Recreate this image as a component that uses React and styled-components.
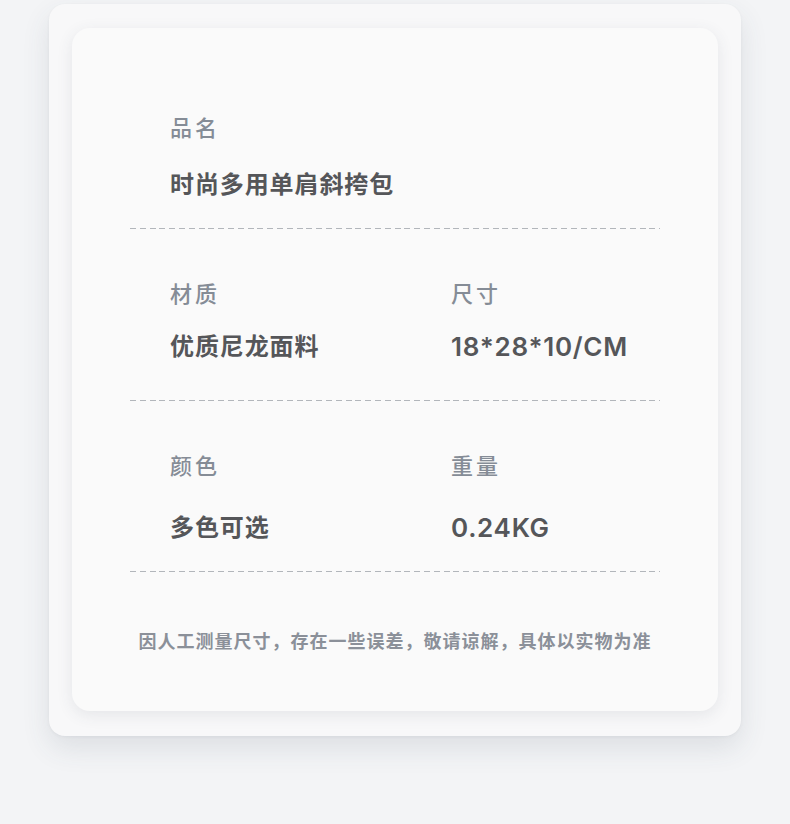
import React from 'react'
import styled, { createGlobalStyle } from 'styled-components';

const GlobalStyle = createGlobalStyle`
  html, body {
    margin: 0;
    padding: 0;
    background: #f3f4f6;
  }
  body {
    font-family: "Noto Sans", "Noto Sans CJK SC", sans-serif;
  }
`

const specs = [
  {
    items: [{ label: '品名', value: '时尚多用单肩斜挎包' }],
    top: 84, gap: 26, bottom: 26,
  },
  {
    items: [
      { label: '材质', value: '优质尼龙面料' },
      { label: '尺寸', value: '18*28*10/CM', latin: true },
    ],
    top: 49, gap: 22, bottom: 36,
  },
  {
    items: [
      { label: '颜色', value: '多色可选' },
      { label: '重量', value: '0.24KG', latin: true },
    ],
    top: 49, gap: 31, bottom: 26,
  },
]

const App = () => {
  return (
    <Page>
      <GlobalStyle />
      <OuterCard>
        <InnerCard>
          {specs.map((spec, i) => (
            <Section key={i} $top={spec.top}>
              <SpecGrid>
                {spec.items.map((item) => (
                  <SpecItem key={item.label}>
                    <Label>{item.label}</Label>
                    <Value $gap={spec.gap} $latin={item.latin}>{item.value}</Value>
                  </SpecItem>
                ))}
              </SpecGrid>
              <Divider $top={spec.bottom} />
            </Section>
          ))}
          <Note>因人工测量尺寸，存在一些误差，敬请谅解，具体以实物为准</Note>
        </InnerCard>
      </OuterCard>
    </Page>
  )
}

const Page = styled.div`
  width: 790px;
  min-height: 824px;
  padding-top: 4px;
  box-sizing: border-box;
  display: flex;
  flex-direction: column;
  align-items: center;
`

const OuterCard = styled.div`
  width: 692px;
  box-sizing: border-box;
  padding: 24px 23px 25px;
  background: #f8f8f9;
  border-radius: 16px;
  box-shadow: 0 12px 28px rgba(60, 70, 90, 0.12), 0 1px 3px rgba(60, 70, 90, 0.06);
`

const InnerCard = styled.div`
  background: #fafafa;
  border-radius: 18px;
  padding: 0 58px 57px;
  box-shadow: 0 4px 16px rgba(60, 70, 90, 0.10);
`

const Section = styled.div`
  padding-top: ${p => p.$top}px;
`

const SpecGrid = styled.div`
  display: grid;
  grid-template-columns: 281px 1fr;
  padding: 0 40px;
`

const SpecItem = styled.div`
  display: flex;
  flex-direction: column;
`

const Label = styled.div`
  font-size: 22px;
  line-height: 30px;
  letter-spacing: 3px;
  color: #858c96;
  font-weight: 500;
`

const Value = styled.div`
  margin-top: ${p => p.$gap}px;
  font-family: "Inter", "Noto Sans CJK SC", sans-serif;
  font-size: ${p => (p.$latin ? 26 : 24)}px;
  line-height: 34px;
  letter-spacing: ${p => (p.$latin ? 0.7 : 0.9)}px;
  color: #555659;
  font-weight: 600;
`

const Divider = styled.div`
  height: 1px;
  margin-top: ${p => p.$top}px;
  background: repeating-linear-gradient(to right, #b2b6bb 0 6px, transparent 6px 9.8px);
`

const Note = styled.div`
  margin-top: 56px;
  font-size: 18px;
  line-height: 26px;
  letter-spacing: 1px;
  text-align: center;
  color: #8b9099;
  font-weight: 600;
`

export default App;
